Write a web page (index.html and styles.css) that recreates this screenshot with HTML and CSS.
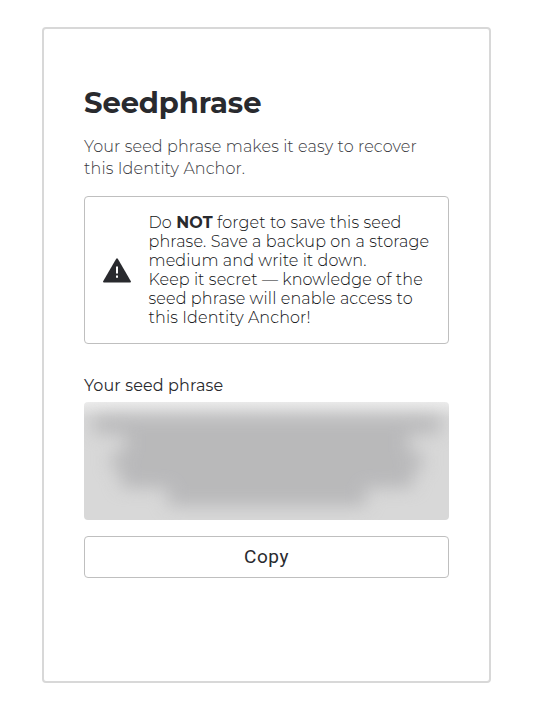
FILE: index.html
```html
<!DOCTYPE html>
<html lang="en">
<head>
<meta charset="utf-8">
<title>Seedphrase</title>
<link rel="stylesheet" href="styles.css">
</head>
<body>
<main class="card">
  <h1 class="title">Seedphrase</h1>
  <p class="intro">Your seed phrase makes it easy to recover<br>this Identity Anchor.</p>
  <section class="warning">
    <svg class="warning-icon" viewBox="0 0 28 25" aria-hidden="true">
      <path fill="#292a2e" d="M13.2.8Q14-.4 14.8.8L27.7 23Q28.500 24.500 27 24.500H1Q-.5 24.500.3 23Z"/>
      <path fill="#fff" d="M13 8.500h2v7h-2zM13 17.500h2v2.300h-2z"/>
    </svg>
    <p class="warning-text">Do <b>NOT</b> forget to save this seed<br>phrase. Save a backup on a storage<br>medium and write it down.<br>Keep it secret — knowledge of the<br>seed phrase will enable access to<br>this Identity Anchor!</p>
  </section>
  <h2 class="label">Your seed phrase</h2>
  <div class="phrase">
    <div class="phrase-lines">
      <i class="l1"></i><i class="l2"></i><i class="l3"></i><i class="l4"></i><i class="l5"></i>
    </div>
  </div>
  <button class="copy">Copy</button>
</main>
</body>
</html>
```
FILE: styles.css
```css
* { box-sizing: border-box; }
body { margin: 0; background: #fff; color: #292a2e; font-family: Montserrat, Inter, sans-serif; }
.card { width: 449px; height: 656px; margin: 27px 0 0 42px; padding: 56px 40px 0; border: 2px solid #d8d8d8; border-radius: 4px; }
.title { margin: 0; font-size: 29px; line-height: 36px; font-weight: 700; letter-spacing: -.08px; white-space: nowrap; }
.intro { margin: 15px 0 0; font-size: 16px; line-height: 22px; font-weight: 300; letter-spacing: .125px; color: #38393e; white-space: nowrap; }
.warning { display: flex; align-items: center; width: 365px; height: 148px; margin-top: 16px; padding-left: 18px; border: 1px solid #bfbfbf; border-radius: 4px; }
.warning-icon { width: 28px; height: 25px; flex: none; }
.warning-text { margin: 0 0 0 17.500px; font-size: 16px; line-height: 19px; font-weight: 300; letter-spacing: .13px; color: #101114; white-space: nowrap; }
.warning-text b { font-weight: 700; color: #292a2e; }
.label { margin: 32px 0 0; font-size: 16px; line-height: 20px; font-weight: 400; letter-spacing: .13px; white-space: nowrap; }
.phrase { width: 365px; height: 118px; margin-top: 6px; padding-top: 16px; border-radius: 4px; overflow: hidden; background: linear-gradient(#ececec, #d8d8d8 16px); }
.phrase-lines { display: flex; flex-direction: column; align-items: center; gap: 4px; filter: blur(9px); }
.phrase-lines i { height: 14px; background: #b0b0b2; }
.l1 { width: 346px; }
.l2 { width: 284px; }
.l3 { width: 310px; }
.l4 { width: 292px; }
.l5 { width: 198px; }
.copy { display: block; width: 365px; height: 42px; margin-top: 16px; padding: 0; border: 1px solid #bfbfbf; border-radius: 4px; background: #fff; color: #292a2e; font: 400 19px/40px Roboto, sans-serif; letter-spacing: .5px; }
```
